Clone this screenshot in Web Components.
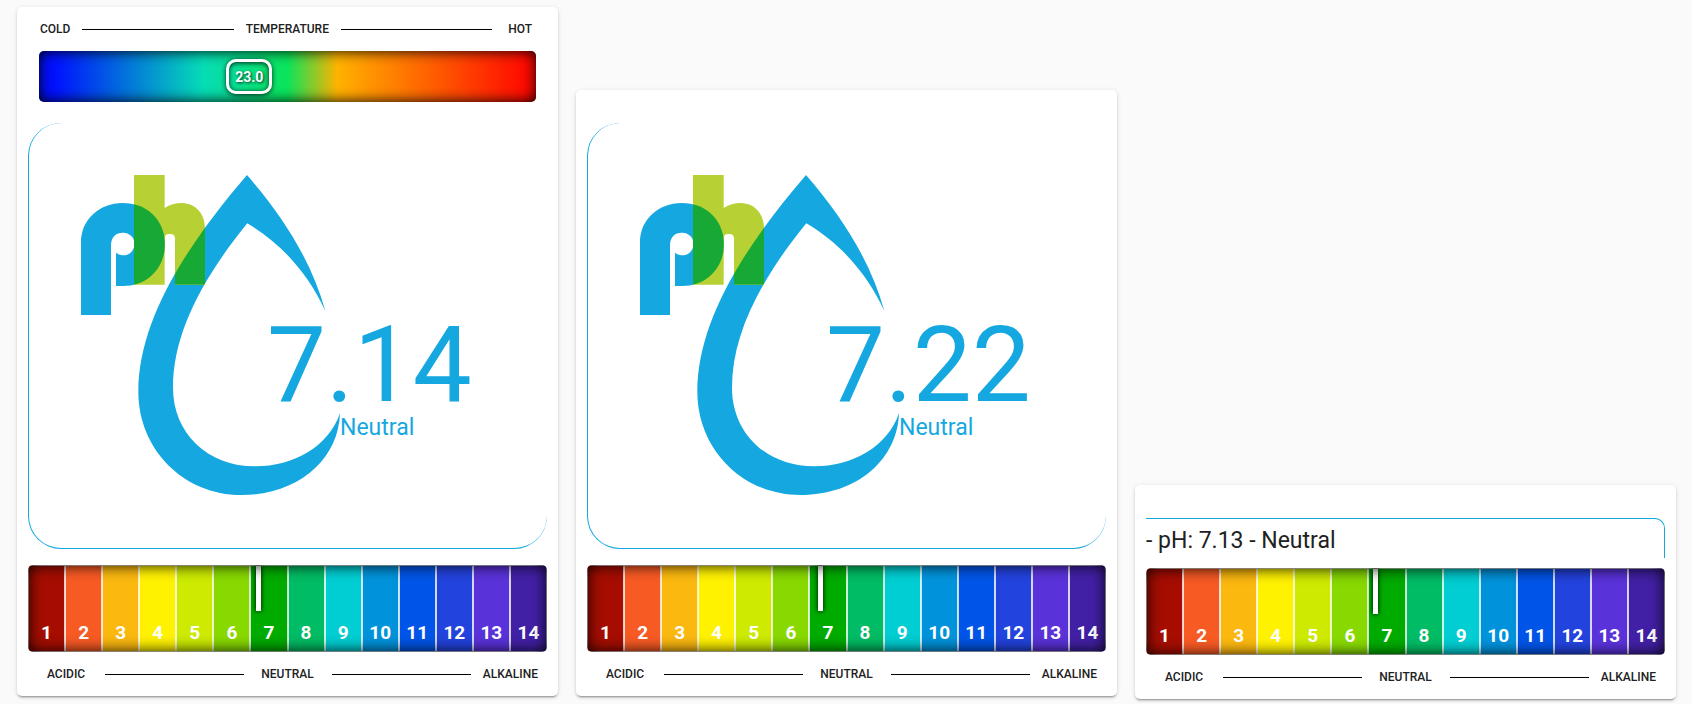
<!DOCTYPE html>
<html lang="en">
<head>
<meta charset="utf-8">
<title>Pool pH</title>
<style>
body { margin: 0; background: #fafafa; color: #212121; font-family: Roboto, "Liberation Sans", sans-serif; }
</style>
</head>
<body>
<ph-dashboard>
  <ph-card><temperature-bar value="23.0"></temperature-bar><ph-logo value="7.14">Neutral</ph-logo><ph-scale value="7.14"></ph-scale></ph-card>
  <ph-card><ph-logo value="7.22">Neutral</ph-logo><ph-scale value="7.22"></ph-scale></ph-card>
  <ph-card compact><ph-line>- pH: 7.13 - Neutral</ph-line><ph-scale value="7.13"></ph-scale></ph-card>
</ph-dashboard>
<script>
class PhDashboard extends HTMLElement {
  constructor() {
    super();
    this.attachShadow({ mode: 'open' }).innerHTML = `
      <style>
        :host { display: block; }
        main { display: grid; grid-template-columns: repeat(3, minmax(0, 1fr)); gap: 18px; align-items: end; padding: 7px 16px 4px 17px; }
      </style>
      <main><slot></slot></main>`;
  }
}

class PhCard extends HTMLElement {
  constructor() {
    super();
    this.attachShadow({ mode: 'open' }).innerHTML = `
      <style>
        :host { display: block; box-sizing: border-box; padding: 12px 11px 14px; margin-bottom: 3px; background: #fff; border-radius: 5px;
          box-shadow: 0 2px 2px 0 rgba(0,0,0,.14), 0 1px 5px 0 rgba(0,0,0,.12), 0 3px 1px -2px rgba(0,0,0,.2); }
        :host([compact]) { margin-bottom: 0; }
      </style>
      <slot></slot>`;
  }
}

class TemperatureBar extends HTMLElement {
  constructor() {
    super();
    this.attachShadow({ mode: 'open' }).innerHTML = `
      <style>
        :host { display: block; padding: 2px 11px 0; }
        .legend { display: flex; align-items: center; padding: 0 4px 0 1px; font-size: 12px; font-weight: 500; line-height: 16px; }
        .legend i { flex: 1; box-sizing: border-box; height: 2px; border-bottom: 1px solid #000; margin: 0 12px; }
        .legend i:last-of-type { margin-right: 16px; }
        .bar { display: flex; align-items: center; margin-top: 14px; height: 51px; border-radius: 5px;
          background: linear-gradient(90deg, #0010ff 0%, #0010ff 3%, #06dcb6 33%, #0ae45a 50%, #ffb200 60%, #ff0a00 98%);
          box-shadow: inset 0 0 14px #000; }
        .pill { box-sizing: border-box; margin-left: calc(var(--at) * 1% - 23px); width: 46px; height: 35px; border: 3px solid #fff; border-radius: 10px;
          font-size: 14px; font-weight: 700; line-height: 31px; text-align: center; color: #fff; text-shadow: 1px 1px 3px rgba(0,0,0,.8);
          box-shadow: 0 1px 5px rgba(0,0,0,.8), inset 0 1px 5px rgba(0,0,0,.8); }
      </style>
      <div class="legend"><span>COLD</span><i></i><span>TEMPERATURE</span><i></i><span>HOT</span></div>
      <div class="bar"><div class="pill"></div></div>`;
  }
  connectedCallback() {
    const pill = this.shadowRoot.querySelector('.pill');
    pill.textContent = this.getAttribute('value');
    pill.style.setProperty('--at', 42.3);
  }
}

class PhLogo extends HTMLElement {
  constructor() {
    super();
    this.attachShadow({ mode: 'open' }).innerHTML = `
      <style>
        :host { display: block; padding-top: 21px; }
        .frame { position: relative; border: 0 solid #15a8e0; border-width: 0 0 1px 1px; border-radius: 33px; }
        svg { display: block; max-width: 518px; width: 100%; }
        .value, .state { position: absolute; color: #15a8e0; white-space: nowrap; }
        .value { left: 238px; top: 195px; font-size: 105px; line-height: 96px; }
        .state { left: 311px; top: 291px; font-size: 23px; line-height: 28px; }
      </style>
      <div class="frame">
        <svg viewBox="-93 -78 1554 1275" aria-hidden="true">
          <path fill="#15a8e0" d="M561 78C672 206 755 338 796 486C748 382 672 288 562 223C420 397 339 560 339 716C339 852 442 952 586 952C700 952 806 893 840 792C836 930 716 1038 544 1038C370 1038 235 900 235 728C235 520 370 300 561 78Z"/>
          <path fill="#15a8e0" d="M63 498V280C63 212 118 162 188 162C258 162 315 216 315 286C315 356 260 411 190 411H168V311A34 34 0 1 0 188 251C168 251 153 264 153 290V498Z"/>
          <path fill="#b7d134" d="M222 78H314V177C365 145 435 165 435 240V407H345V270C345 259 340 255 329 255C319 255 314 259 314 270V407H222Z"/>
          <clipPath id="h"><path d="M222 78H314V177C365 145 435 165 435 240V407H345V270C345 259 340 255 329 255C319 255 314 259 314 270V407H222Z"/></clipPath>
          <g clip-path="url(#h)" fill="#17a836">
            <path d="M222 166C276 178 315 226 315 286C315 346 276 395 222 407Z"/>
            <path d="M561 78C370 300 235 520 235 728L339 716C339 560 420 397 562 223Z"/>
          </g>
        </svg>
        <div class="value"></div>
        <div class="state"><slot></slot></div>
      </div>`;
  }
  connectedCallback() {
    this.shadowRoot.querySelector('.value').textContent = this.getAttribute('value');
  }
}

class PhLine extends HTMLElement {
  constructor() {
    super();
    this.attachShadow({ mode: 'open' }).innerHTML = `
      <style>
        :host { display: block; padding-top: 21px; }
        div { box-sizing: border-box; height: 40px; padding-top: 8px; margin-bottom: -6px; border: 0 solid #15a8e0; border-width: 1px 1px 0 0; border-top-right-radius: 10px;
          font-size: 23px; line-height: 28px; }
      </style>
      <div><slot></slot></div>`;
  }
}

const PH_COLORS = ['#a60d00', '#f85a24', '#fbb80f', '#fff200', '#cdea00', '#88d900', '#00ab00',
  '#00bc64', '#00ced2', '#0093dc', '#0055e8', '#2343de', '#5a32da', '#4220a6'];

class PhScale extends HTMLElement {
  constructor() {
    super();
    this.attachShadow({ mode: 'open' }).innerHTML = `
      <style>
        :host { display: block; padding-top: 16px; }
        .bar { position: relative; display: grid; grid-template-columns: repeat(14, 1fr); height: 87px; border-radius: 5px; overflow: hidden; }
        .bar::after { content: ""; position: absolute; inset: 0; border-radius: 5px; box-shadow: inset 0 0 15px #000; }
        .cell { box-sizing: border-box; border: 1px solid rgba(255,255,255,.8); padding-top: 56px;
          color: #fff; font-size: 19px; font-weight: 700; line-height: 22px; text-align: center; }
        .marker { position: absolute; top: 1px; width: 5px; height: 45px; background: #fff; box-shadow: 0 0 5px #000; }
        .legend { display: flex; align-items: center; margin-top: 14px; padding: 0 9px 0 19px; font-size: 12px; font-weight: 500; line-height: 16px; }
        .legend i { flex: 1; box-sizing: border-box; height: 2px; border-bottom: 1px solid #000; margin: 0 17px 0 20px; }
        .legend i:last-of-type { margin-right: 12px; margin-left: 18px; }
      </style>
      <div class="bar">${PH_COLORS.map((c, i) => `<div class="cell" style="background-color:${c}">${i + 1}</div>`).join('')}<div class="marker"></div></div>
      <div class="legend"><span>ACIDIC</span><i></i><span>NEUTRAL</span><i></i><span>ALKALINE</span></div>`;
  }
  connectedCallback() {
    const ph = Number(this.getAttribute('value'));
    this.shadowRoot.querySelector('.marker').style.left = `${(ph - 1) / 14 * 100}%`;
  }
}

customElements.define('ph-dashboard', PhDashboard);
customElements.define('ph-card', PhCard);
customElements.define('temperature-bar', TemperatureBar);
customElements.define('ph-logo', PhLogo);
customElements.define('ph-line', PhLine);
customElements.define('ph-scale', PhScale);
</script>
</body>
</html>
